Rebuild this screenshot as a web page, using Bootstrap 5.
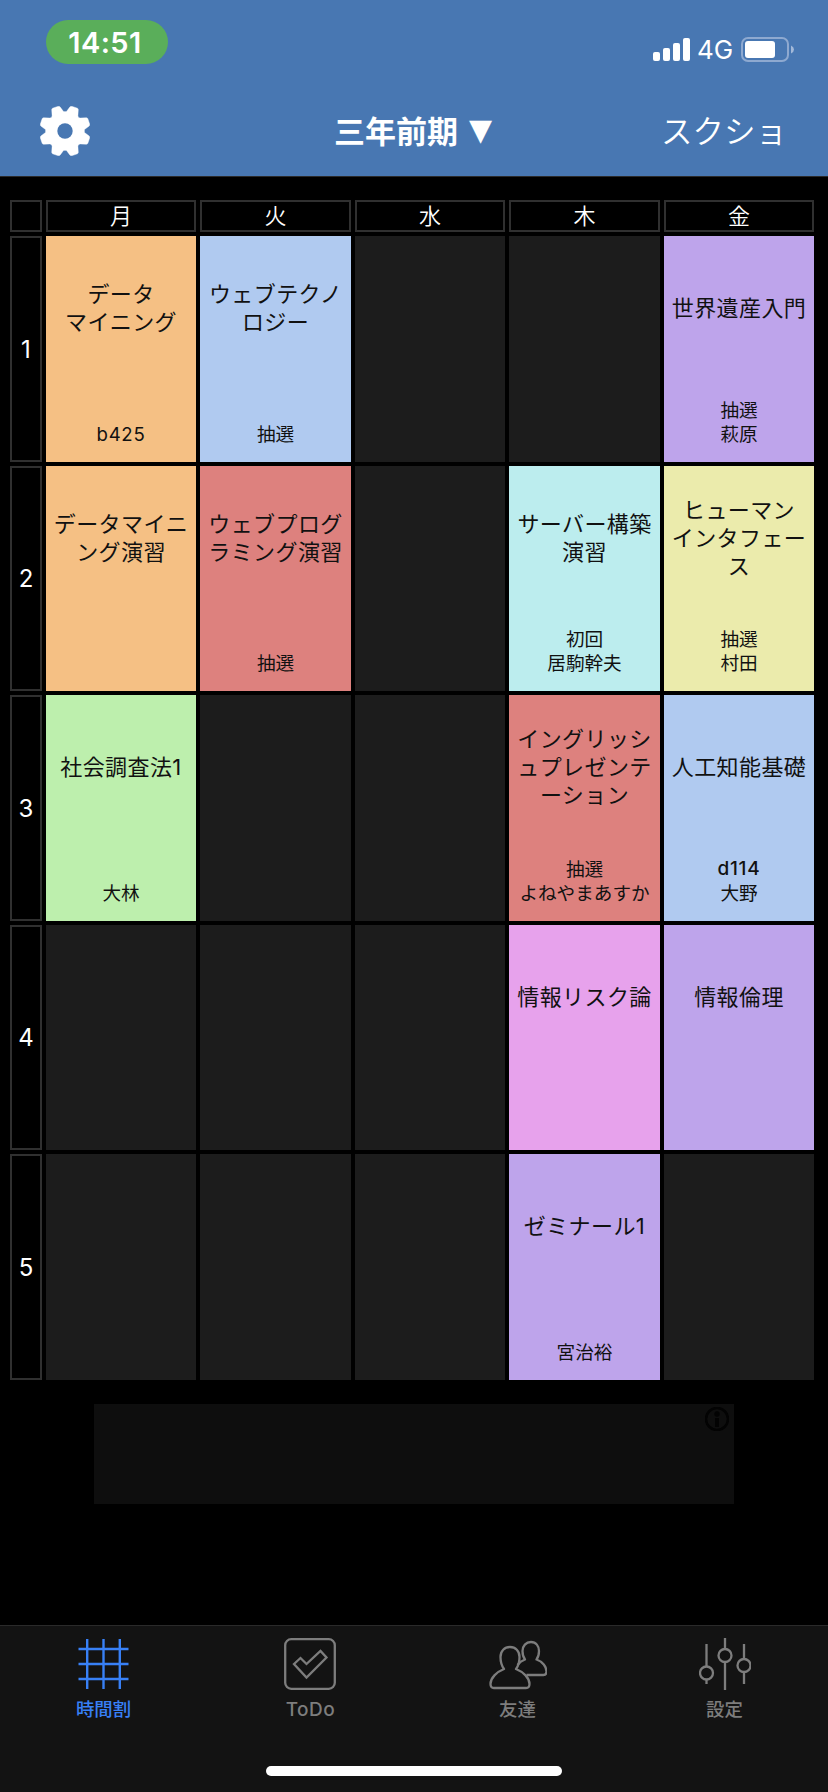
<!DOCTYPE html>
<html lang="ja">
<head>
<meta charset="utf-8">
<meta name="viewport" content="width=device-width, initial-scale=1">
<title>時間割</title>
<link href="https://cdn.jsdelivr.net/npm/bootstrap@5.3.0/dist/css/bootstrap.min.css" rel="stylesheet">
<style>
body{font-family:Inter,"Noto Sans CJK JP",sans-serif;background:#000;color:#fff;height:1792px;overflow:hidden}
svg{display:block;flex:none}
.topbar{height:177px;background:#4877b2;border-bottom:1px solid #2a2a2a}
.status{height:84px;padding:20px 34px 0 46px}
.clock{width:122px;height:44px;background:#5aae5a;border-radius:22px;font-size:29px;font-weight:600;line-height:45px;padding-right:4px;letter-spacing:.4px}
.signal{margin-top:17px;height:26px}
.net{font-size:26px;line-height:26px;font-weight:400;margin:0 7px 0 7px;width:37px}
.title-row{height:92px;display:grid;grid-template-columns:1fr auto 1fr;align-items:center;padding:2px 40px 0}
.term{font-size:31px;font-weight:700;line-height:40px;padding-top:2px;margin-left:-2px}
.tri{font-family:"DejaVu Sans";font-size:30px;font-weight:400;line-height:1;margin-left:11px;position:relative;top:-3px}
.shot{font-size:31.5px;font-weight:350;line-height:40px;padding:2px 1px 0 0}
.timetable{display:grid;grid-template-columns:32px 150px 151px 150px 151px 150px;grid-template-rows:32px 226px 225px 226px 225px 226px;gap:4px;padding:23px 0 0 10px}
.frame{border:2px solid #303030;display:flex;align-items:center;justify-content:center;font-size:22px;line-height:28px;font-weight:350}
.hour{font-size:24px;font-weight:400;padding-top:1px}
.free{background:#1c1c1c}
.course{color:#111;text-align:center;display:flex;flex-direction:column;justify-content:space-between;padding-bottom:16px;white-space:nowrap}
.course h2{font-size:22px;letter-spacing:.4px;font-weight:400;line-height:28px;height:143px;margin:0;display:flex;align-items:center;justify-content:center}
.course p{font-size:18.6px;line-height:24px;margin:0}
.roman{font-size:19px;letter-spacing:.7px}
.c-orange{background:#f5c084}.c-blue{background:#b0caf0}.c-violet{background:#bea4eb}
.c-red{background:#dd817e}.c-aqua{background:#bcedee}.c-lemon{background:#ebebac}
.c-green{background:#bdefad}.c-pink{background:#e7a2ec}
.ad{width:640px;height:100px;margin:24px 0 0 94px;background:#0e0e0e;padding:3px 5px}
.tabs{height:167px;margin-top:121px;background:#131313;border-top:1px solid #2a2a2a;color:#7d7d7d}
.tabs .nav-link{color:inherit;padding:12px 0 0;font-size:18.4px;line-height:24px;font-weight:500;display:flex;flex-direction:column;align-items:center;gap:7px}
.tabs .nav-link.active{color:#3880f6}
.tabs .todo-label{font-size:19px;letter-spacing:.5px;gap:8px}
.tab-row{height:140px}
.home-bar{width:296px;height:10px;border-radius:5px;background:#fff}
</style>
</head>
<body>
<header class="topbar">
  <div class="status d-flex justify-content-between align-items-start">
    <div class="clock text-center">14:51</div>
    <div class="signal d-flex align-items-center">
      <svg width="37" height="26" fill="#fff"><rect y="15" width="7" height="9" rx="2"/><rect x="10" y="11" width="7" height="13" rx="2"/><rect x="20" y="6" width="7" height="18" rx="2"/><rect x="30" y="1" width="7" height="23" rx="2"/></svg>
      <span class="net">4G</span>
      <svg width="53" height="26"><rect x="1" y="1" width="46" height="23" rx="6" fill="none" stroke="#8ea9d0" stroke-width="2"/><rect x="4" y="4" width="30" height="17" rx="3" fill="#fff"/><path d="M50 8.500q3 1.500 3 4t-3 4z" fill="#a3b9d9"/></svg>
    </div>
  </div>
  <nav class="title-row">
    <svg width="50" height="50" viewBox="-25 -25 50 50">
      <defs><path id="cog" d="M0 0V-19.300L1.500-19.500L5-24.200L6.500-24.800L12.500-22.800L13.300-21.500L12.900-15Q13.200-13.200 15-12.900L21.500-13.300L22.800-12.500L24.800-6.500L24.200-5L19.500-1.500L19.300 0Z"/></defs>
      <g fill="#fff" stroke="#fff" stroke-width=".4" stroke-linejoin="round"><use href="#cog"/><use href="#cog" transform="rotate(90)"/><use href="#cog" transform="rotate(180)"/><use href="#cog" transform="rotate(270)"/></g>
      <circle r="7.700" fill="#4877b2"/>
    </svg>
    <div class="term">三年前期<span class="tri">▼</span></div>
    <div class="shot text-end">スクショ</div>
  </nav>
</header>

<main>
  <section class="timetable">
    <div class="frame"></div><div class="frame">月</div><div class="frame">火</div><div class="frame">水</div><div class="frame">木</div><div class="frame">金</div>

    <div class="frame hour">1</div>
    <div class="course c-orange"><h2>データ<br>マイニング</h2><p class="roman">b425</p></div>
    <div class="course c-blue"><h2>ウェブテクノ<br>ロジー</h2><p>抽選</p></div>
    <div class="free"></div>
    <div class="free"></div>
    <div class="course c-violet"><h2>世界遺産入門</h2><p>抽選<br>萩原</p></div>

    <div class="frame hour">2</div>
    <div class="course c-orange"><h2>データマイニ<br>ング演習</h2></div>
    <div class="course c-red"><h2>ウェブプログ<br>ラミング演習</h2><p>抽選</p></div>
    <div class="free"></div>
    <div class="course c-aqua"><h2>サーバー構築<br>演習</h2><p>初回<br>居駒幹夫</p></div>
    <div class="course c-lemon"><h2>ヒューマン<br>インタフェー<br>ス</h2><p>抽選<br>村田</p></div>

    <div class="frame hour">3</div>
    <div class="course c-green"><h2>社会調査法1</h2><p>大林</p></div>
    <div class="free"></div>
    <div class="free"></div>
    <div class="course c-red"><h2>イングリッシ<br>ュプレゼンテ<br>ーション</h2><p>抽選<br>よねやまあすか</p></div>
    <div class="course c-blue"><h2>人工知能基礎</h2><p><span class="roman fw-medium">d114</span><br>大野</p></div>

    <div class="frame hour">4</div>
    <div class="free"></div>
    <div class="free"></div>
    <div class="free"></div>
    <div class="course c-pink"><h2>情報リスク論</h2></div>
    <div class="course c-violet"><h2>情報倫理</h2></div>

    <div class="frame hour">5</div>
    <div class="free"></div>
    <div class="free"></div>
    <div class="free"></div>
    <div class="course c-violet"><h2>ゼミナール1</h2><p>宮治裕</p></div>
    <div class="free"></div>
  </section>
  <aside class="ad d-flex justify-content-end">
    <svg width="24" height="24" viewBox="0 0 24 24"><circle cx="12" cy="12" r="11" fill="none" stroke="#030303" stroke-width="2.600"/><circle cx="12" cy="7" r="2.700" fill="#030303"/><path d="M10 11h4v9h-4z" fill="#030303"/></svg>
  </aside>
</main>

<footer class="tabs">
  <nav class="nav nav-fill tab-row flex-nowrap">
    <a class="nav-link active w-25" href="#">
      <svg width="52" height="52" fill="none" stroke="currentColor" stroke-width="2.400"><path d="M9.200 1v50M25.500 1v50M41.800 1v50M.500 11h50M.500 26h50M.500 41h50"/></svg>
      時間割</a>
    <a class="nav-link w-25 todo-label" href="#">
      <svg width="53" height="52" fill="none" stroke="currentColor" stroke-width="2.300"><rect x="1.200" y="1.200" width="49.600" height="49.600" rx="6"/><path d="M10 26l6.500-6 6 6L36.500 13l6 6.500L22.500 39.500z"/></svg>
      ToDo</a>
    <a class="nav-link w-25" href="#">
      <svg width="58" height="52" viewBox="-.5 0 58 52" fill="none" stroke="currentColor" stroke-width="2.300" stroke-linejoin="round"><path d="M14.500 31C11.500 27 11 24 11 19 11 13 15 9 20.500 9S30 13 30 19c0 5-.3 8-3.500 12C34 34 40 40 40 46c0 2.500-1.500 4-3.500 4h-32C2.500 50 1 48.500 1 46c0-6 6-12 13.500-15z"/><path d="M28 27q3-4 7.500-5.500C33.500 19 33 16 33 13c0-5 3.500-9 8.500-9s8 4 8 9c0 3-.5 6-2.500 8.500C53 23.500 57 29 57 33.500c0 2-1 3.500-3 3.500H37"/></svg>
      友達</a>
    <a class="nav-link w-25" href="#">
      <svg width="52" height="52" fill="none" stroke="currentColor" stroke-width="2.300"><path d="M7.500 6v22M7.500 42v4M26 0v10M26 24v28M45 6v14M45 34v12"/><circle cx="7.500" cy="35" r="6.500"/><circle cx="26" cy="17.500" r="6.500"/><circle cx="45" cy="27.500" r="6.500"/></svg>
      設定</a>
  </nav>
  <div class="home-bar mx-auto"></div>
</footer>
<script src="https://cdn.jsdelivr.net/npm/bootstrap@5.3.0/dist/js/bootstrap.bundle.min.js"></script>
</body>
</html>
